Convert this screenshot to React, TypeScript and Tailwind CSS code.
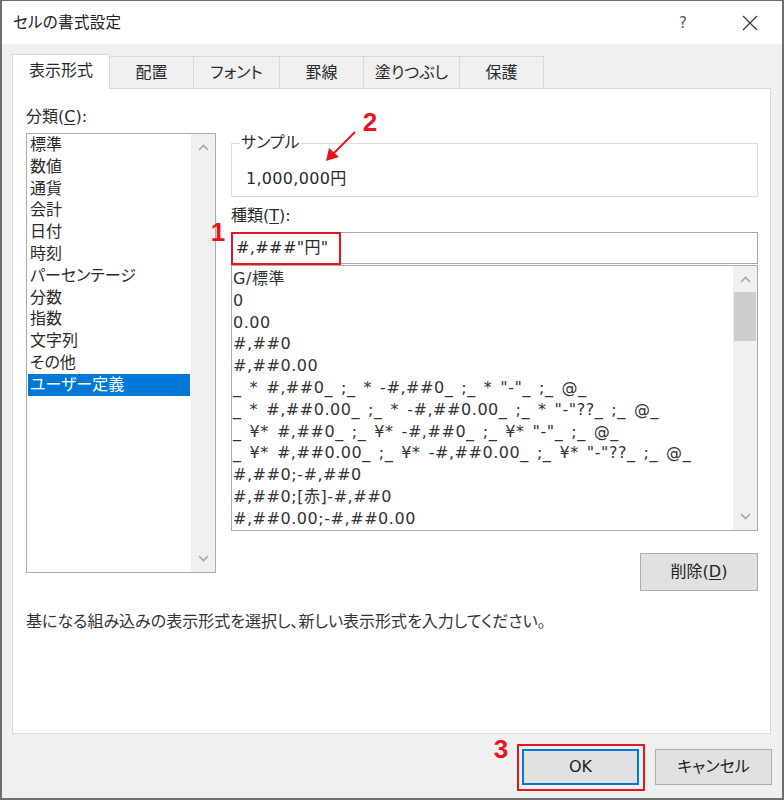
import React from "react";

const categories = [
  "標準",
  "数値",
  "通貨",
  "会計",
  "日付",
  "時刻",
  "パーセンテージ",
  "分数",
  "指数",
  "文字列",
  "その他",
  "ユーザー定義",
];

const formats = [
  "G/標準",
  "0",
  "0.00",
  "#,##0",
  "#,##0.00",
  '_ * #,##0_ ;_ * -#,##0_ ;_ * "-"_ ;_ @_',
  '_ * #,##0.00_ ;_ * -#,##0.00_ ;_ * "-"??_ ;_ @_',
  '_ ¥* #,##0_ ;_ ¥* -#,##0_ ;_ ¥* "-"_ ;_ @_',
  '_ ¥* #,##0.00_ ;_ ¥* -#,##0.00_ ;_ ¥* "-"??_ ;_ @_',
  "#,##0;-#,##0",
  "#,##0;[赤]-#,##0",
  "#,##0.00;-#,##0.00",
];

const tabs = [
  { label: "配置", w: "w-[84px]" },
  { label: "フォント", w: "w-[86px]" },
  { label: "罫線", w: "w-[84px]" },
  { label: "塗りつぶし", w: "w-[96px]" },
  { label: "保護", w: "w-[84px]" },
];

function ChevronUp() {
  return (
    <svg width="11" height="7" viewBox="0 0 11 7">
      <polyline points="1,6 5.5,1.5 10,6" fill="none" stroke="#a6a6a6" strokeWidth="1.6" />
    </svg>
  );
}

function ChevronDown() {
  return (
    <svg width="11" height="7" viewBox="0 0 11 7">
      <polyline points="1,1 5.5,5.5 10,1" fill="none" stroke="#a6a6a6" strokeWidth="1.6" />
    </svg>
  );
}

export default function App() {
  return (
    <div className="relative w-[784px] h-[800px] bg-[#f0f0f0] border-x-2 border-b-2 border-t border-[#6e6e6e] flex flex-col overflow-hidden font-['DejaVu_Sans','Noto_Sans_CJK_JP',sans-serif] text-[#2a2a2a] [font-feature-settings:'palt']">
      {/* Title bar */}
      <div className="h-[43px] bg-white flex items-center pl-[11px]">
        <span className="text-[15.5px] leading-[22px] text-[#222] tracking-[0.3px]">セルの書式設定</span>
        <span className="ml-auto text-[15px] text-[#555] leading-[22px] mr-[55px]">?</span>
        <svg width="16" height="16" viewBox="0 0 16 16" className="mr-[24px]">
          <line x1="1" y1="1" x2="15" y2="15" stroke="#333" strokeWidth="1.1" />
          <line x1="15" y1="1" x2="1" y2="15" stroke="#333" strokeWidth="1.1" />
        </svg>
      </div>

      {/* Body */}
      <div className="flex flex-col pt-[10px]">
        {/* Tabs */}
        <div className="flex items-end h-[34px] ml-[10px]">
          <div className="relative z-10 w-[98px] h-[35px] -mb-px bg-white border-x border-t border-[#d9d9d9] flex items-center justify-center text-[16px] leading-[22px] pb-[2px]">
            表示形式
          </div>
          {tabs.map((t) => (
            <div
              key={t.label}
              className={`${t.w} h-[32px] border-t border-r border-[#d9d9d9] flex items-center justify-center text-[16px] leading-[22px]`}
            >
              {t.label}
            </div>
          ))}
        </div>

        {/* Panel */}
        <div className="ml-[10px] w-[759px] h-[646px] bg-white border border-[#d9d9d9] flex flex-col">
          <div className="flex items-start pl-[13px]">
            {/* Left column */}
            <div className="flex flex-col pt-[17px] w-[190px]">
              <div className="text-[16px] leading-[22px]">
                分類(<span className="underline underline-offset-2">C</span>):
              </div>
              <div className="mt-[5px] h-[440px] border border-[#ababab] flex">
                <div className="flex-1 flex flex-col px-[1px]">
                  {categories.map((c) => (
                    <div
                      key={c}
                      className={`h-[21.8px] leading-[21.8px] pl-[2px] text-[16px] ${
                        c === "ユーザー定義" ? "bg-[#0078d7] text-white" : ""
                      }`}
                    >
                      {c}
                    </div>
                  ))}
                </div>
                <div className="w-[24px] bg-[#f0f0f0] flex flex-col items-center justify-between py-[10px]">
                  <ChevronUp />
                  <ChevronDown />
                </div>
              </div>
            </div>

            {/* Right column */}
            <div className="ml-[15px] w-[527px] flex flex-col pt-[54px]">
              <div className="relative h-[54px] border border-[#dcdcdc] pt-[23px] pl-[14px]">
                <span className="absolute left-[8px] -top-[12px] bg-white px-[1px] text-[16px] leading-[22px]">
                  サンプル
                </span>
                <span className="text-[16px] leading-[22px] tracking-[0.3px]">1,000,000円</span>
              </div>
              <div className="mt-[8px] text-[16px] leading-[22px]">
                種類(<span className="underline underline-offset-2">T</span>):
              </div>
              <div className="mt-[5px] h-[32px] border border-[#a8a8a8] flex items-center pl-[4px] text-[16px] leading-[22px] tracking-[0.4px]">
                #,###"円"
              </div>
              <div className="mt-[1px] h-[266px] border border-[#ababab] flex">
                <div className="flex-1 flex flex-col pt-[2px] pl-[1px] text-[#333]">
                  {formats.map((f) => (
                    <div
                      key={f}
                      className="h-[21.8px] leading-[21.8px] text-[16px] whitespace-pre tracking-[0.55px] [word-spacing:2.4px]"
                    >
                      {f}
                    </div>
                  ))}
                </div>
                <div className="w-[24px] bg-[#f0f0f0] flex flex-col items-center pt-[10px] pb-[10px]">
                  <ChevronUp />
                  <div className="mt-[9px] w-[22px] h-[49px] bg-[#cdcdcd]" />
                  <div className="mt-auto">
                    <ChevronDown />
                  </div>
                </div>
              </div>
              <button className="self-end mt-[22px] w-[118px] h-[38px] bg-[#e1e1e1] border border-[#adadad] text-[16px] leading-[22px] text-[#222]">
                削除(<span className="underline underline-offset-2">D</span>)
              </button>
            </div>
          </div>
          <div className="pl-[13px] mt-[20px] text-[16px] leading-[22px] text-[#333]">
            基になる組み込みの表示形式を選択し、新しい表示形式を入力してください。
          </div>
        </div>

        {/* Bottom buttons */}
        <div className="flex justify-end gap-[16px] pr-[10px] mt-[15px]">
          <button className="w-[117px] h-[36px] bg-[#e1e1e1] border-2 border-[#0078d7] text-[16px] leading-[22px] text-[#222]">
            OK
          </button>
          <button className="w-[117px] h-[36px] bg-[#e1e1e1] border border-[#adadad] text-[16px] leading-[22px] text-[#222]">
            キャンセル
          </button>
        </div>
      </div>

      {/* Annotations */}
      <div className="absolute left-[229px] top-[231px] w-[110px] h-[33px] border-2 border-[#e8141e]" />
      <div className="absolute left-[515px] top-[743px] w-[128px] h-[47px] border-2 border-[#e8141e]" />
      <span className="absolute left-[206px] top-[218px] w-[20px] text-center text-[26px] leading-[26px] font-bold text-[#e8141e] font-['Liberation_Sans',sans-serif]">
        1
      </span>
      <span className="absolute left-[358px] top-[108px] w-[20px] text-center text-[26px] leading-[26px] font-bold text-[#e8141e] font-['Liberation_Sans',sans-serif]">
        2
      </span>
      <span className="absolute left-[489px] top-[735px] w-[20px] text-center text-[26px] leading-[26px] font-bold text-[#e8141e] font-['Liberation_Sans',sans-serif]">
        3
      </span>
      <svg className="absolute left-[316px] top-[125px]" width="46" height="42" viewBox="0 0 46 42">
        <line x1="37" y1="6" x2="14" y2="29" stroke="#e8141e" strokeWidth="2" />
        <polygon points="8,35 11,22 21,31" fill="#e8141e" />
      </svg>
    </div>
  );
}
